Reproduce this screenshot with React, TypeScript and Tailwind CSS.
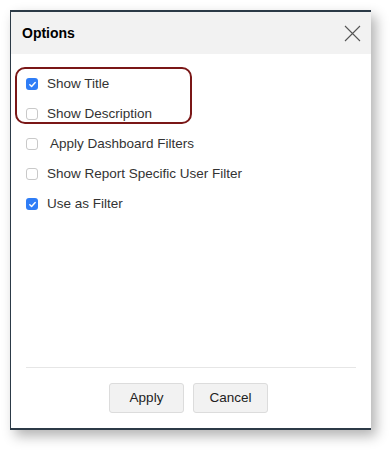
import React, { useState } from 'react';

const font = { fontFamily: '"Liberation Sans", Arial, sans-serif' };

interface OptionRowProps {
  label: string;
  checked: boolean;
  onToggle: () => void;
  indent?: boolean;
}

const OptionRow: React.FC<OptionRowProps> = ({ label, checked, onToggle, indent }) => (
  <label className="flex h-[30px] cursor-pointer items-center">
    <span
      onClick={onToggle}
      className={
        checked
          ? 'flex h-[12px] w-[12px] items-center justify-center rounded-[3px] bg-[#2f7df6]'
          : 'h-[12px] w-[12px] rounded-[3px] border border-[#c9c9c9] bg-white'
      }
    >
      {checked && (
        <svg width="9" height="9" viewBox="0 0 10 10" fill="none">
          <path d="M2 5.2l2 2L8 2.8" stroke="white" strokeWidth="1.6" strokeLinecap="round" strokeLinejoin="round" />
        </svg>
      )}
    </span>
    <span className={indent ? 'ml-[12px] text-[13.5px] text-[#333]' : 'ml-[9px] text-[13.5px] text-[#333]'}>{label}</span>
  </label>
);

export default function App() {
  const [opts, setOpts] = useState([
    { label: 'Show Title', checked: true },
    { label: 'Show Description', checked: false },
    { label: 'Apply Dashboard Filters', checked: false, indent: true },
    { label: 'Show Report Specific User Filter', checked: false },
    { label: 'Use as Filter', checked: true },
  ]);

  const toggle = (i: number) =>
    setOpts(opts.map((o, idx) => (idx === i ? { ...o, checked: !o.checked } : o)));

  return (
    <div className="h-[450px] w-[391px] bg-white pl-[10px] pt-[10px]" style={font}>
      <div className="relative flex h-[420px] w-[361px] flex-col border-b-2 border-l border-t-2 border-[#2c3a47] bg-white shadow-[5px_6px_12px_rgba(0,0,0,0.3)]">
        <div className="flex h-[42px] items-center justify-between bg-[#f2f2f2] pl-[11px] pr-[10px]">
          <span className="text-[14px] font-bold text-black">Options</span>
          <button className="text-[#555]">
            <svg width="17" height="17" viewBox="0 0 17 17" fill="none">
              <path d="M1 1l15 15M16 1L1 16" stroke="#555" strokeWidth="1.1" />
            </svg>
          </button>
        </div>

        <div className="flex-1 pl-[15px] pt-[15px]">
          {opts.map((o, i) => (
            <OptionRow key={o.label} label={o.label} checked={o.checked} indent={o.indent} onToggle={() => toggle(i)} />
          ))}
        </div>

        {/* highlight annotation */}
        <div className="pointer-events-none absolute left-[4px] top-[55px] h-[57px] w-[177px] rounded-[10px] border-2 border-[#7a1717]" />

        <div className="mx-[15px] border-t border-[#e6e6e6]" />
        <div className="flex justify-center gap-[9px] pb-[15px] pt-[15px] pr-[5px]">
          <button className="h-[30px] w-[75px] rounded-[3px] border border-[#dcdcdc] bg-[#f2f2f2] text-[13.5px] text-[#222]">
            Apply
          </button>
          <button className="h-[30px] w-[75px] rounded-[3px] border border-[#dcdcdc] bg-[#f2f2f2] text-[13.5px] text-[#222]">
            Cancel
          </button>
        </div>
      </div>
    </div>
  );
}
